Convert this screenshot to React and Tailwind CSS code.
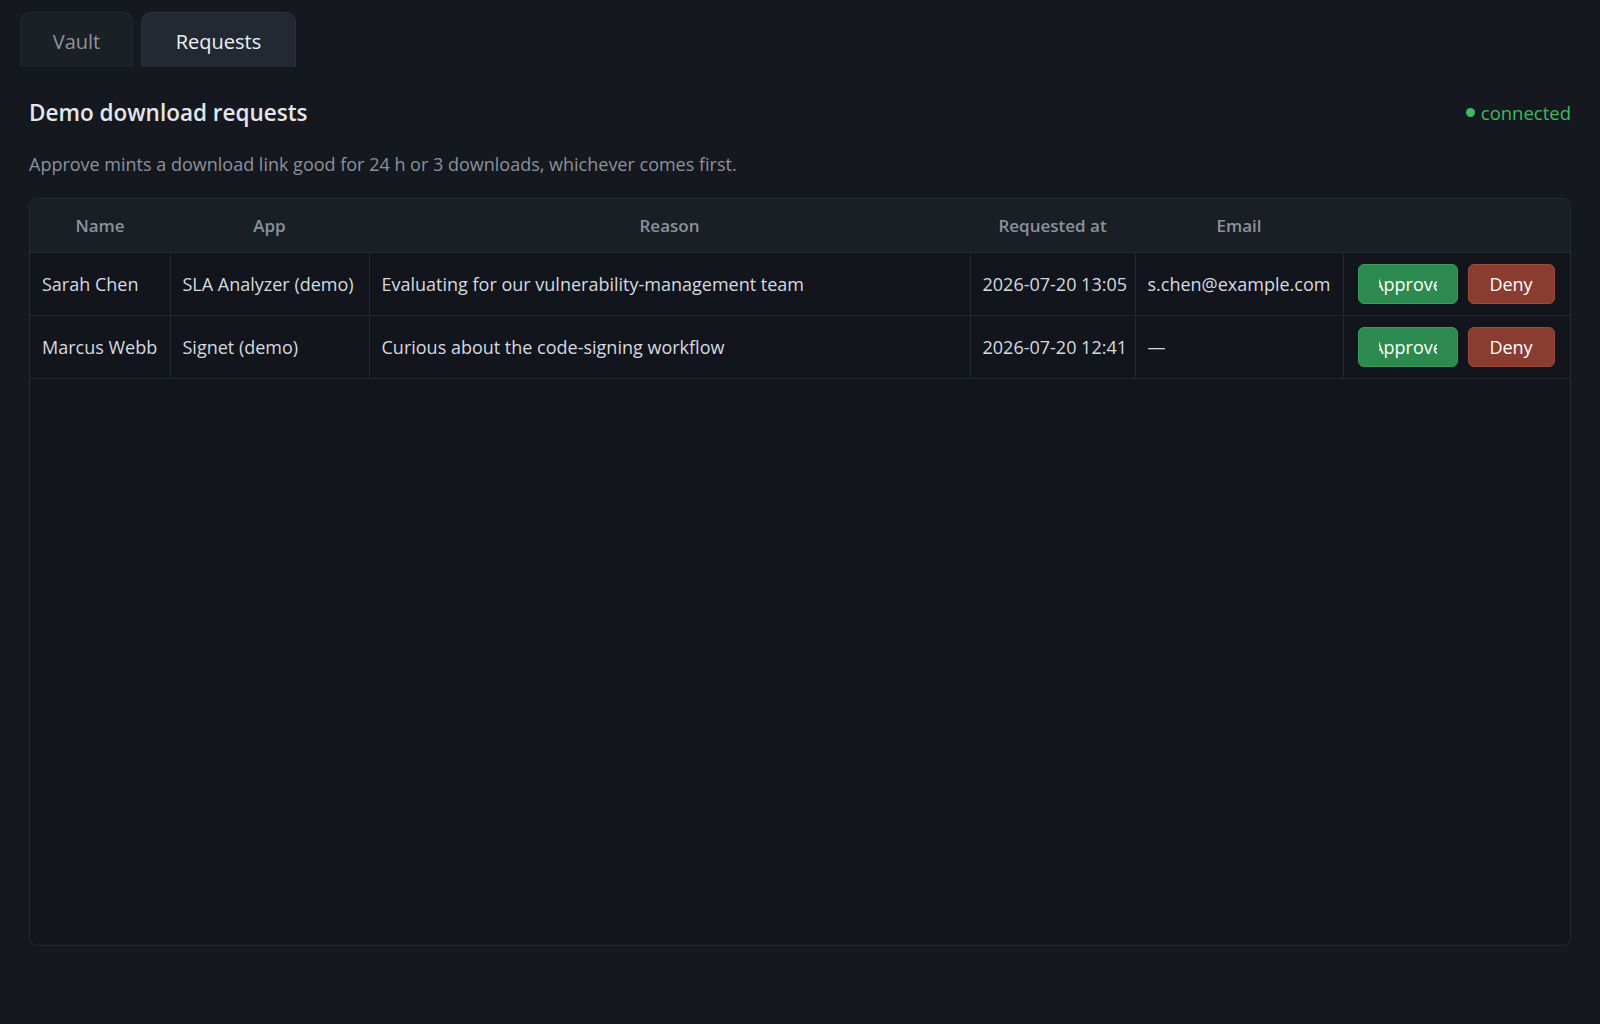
import { useState } from 'react';

const rows = [
  {
    name: 'Sarah Chen',
    app: 'SLA Analyzer (demo)',
    reason: 'Evaluating for our vulnerability-management team',
    at: '2026-07-20 13:05',
    email: 's.chen@example.com',
  },
  {
    name: 'Marcus Webb',
    app: 'Signet (demo)',
    reason: 'Curious about the code-signing workflow',
    at: '2026-07-20 12:41',
    email: '—',
  },
];

/* ─── Botão com texto cortado no centro ─── */
function ActionButton({ label, tone, width }) {
  const colors =
    tone === 'green'
      ? 'bg-[#2d8a4e] border-[#3a9a5c]'
      : 'bg-[#8a3c30] border-[#9c4a3d]';
  return (
    <button
      type="button"
      className={`flex h-10 items-center justify-center rounded-md border text-[18px] text-white ${colors} ${width}`}
    >
      <span className="flex w-[58px] justify-center overflow-hidden whitespace-nowrap">
        <span className="shrink-0">{label}</span>
      </span>
    </button>
  );
}

export default function App() {
  const [tab, setTab] = useState('requests');

  return (
    <div
      className="min-h-screen h-[1024px] bg-[#15181e] text-[#d6dae0]"
      style={{ fontFamily: '"Open Sans", "Noto Sans", sans-serif' }}
    >
      {/* ── Abas ── */}
      <div className="flex gap-2 px-5 pt-3">
        <button
          type="button"
          onClick={() => setTab('vault')}
          className={`h-[55px] w-[113px] rounded-t-[10px] border border-b-0 pt-[3px] text-[20px] font-medium ${
            tab === 'vault' ? 'border-[#2c323c] bg-[#232933] text-[#eef1f4]' : 'border-[#22272f] bg-[#1b1f26] text-[#8e959f]'
          }`}
        >
          Vault
        </button>
        <button
          type="button"
          onClick={() => setTab('requests')}
          className={`h-[55px] w-[155px] rounded-t-[10px] border border-b-0 pt-[3px] text-[20px] font-medium ${
            tab === 'requests' ? 'border-[#2c323c] bg-[#232933] text-[#eef1f4]' : 'border-[#22272f] bg-[#1b1f26] text-[#8e959f]'
          }`}
        >
          Requests
        </button>
      </div>

      <div className="px-[29px]">
        <div className="flex items-center justify-between pt-[29px]">
          <h2 className="text-[22.5px] font-semibold text-[#e3e6ea]">Demo download requests</h2>
          <span className="flex items-center gap-[6px] text-[18.5px] text-[#3fb862]">
            <span className="h-[9px] w-[9px] rounded-full bg-[#3fb862]" />
            connected
          </span>
        </div>

        <p className="mt-[20px] text-[18px] leading-7 text-[#8b929c]">
          Approve mints a download link good for 24 h or 3 downloads, whichever comes first.
        </p>

        {/* ── Tabela ── */}
        <div className="mt-[20px] h-[748px] overflow-hidden rounded-lg border border-[#262b33] bg-[#12151b]">
          <table className="w-full table-fixed border-collapse text-[18px]">
            <thead>
              <tr className="h-[54px] bg-[#1a1e25] text-[17px] text-[#8b929c]">
                <th className="w-[140px] font-semibold">Name</th>
                <th className="w-[199px] font-semibold">App</th>
                <th className="w-[601px] font-semibold">Reason</th>
                <th className="w-[165px] font-semibold">Requested at</th>
                <th className="w-[208px] font-semibold">Email</th>
                <th />
              </tr>
            </thead>
            <tbody>
              {rows.map(r => (
                <tr key={r.name} className="h-[63px] border-t border-b border-[#23282f]">
                  <td className="border-r border-[#23282f] px-3 whitespace-nowrap">{r.name}</td>
                  <td className="border-r border-[#23282f] px-3 whitespace-nowrap">{r.app}</td>
                  <td className="border-r border-[#23282f] px-3">{r.reason}</td>
                  <td className="border-r border-[#23282f] px-3 whitespace-nowrap">{r.at}</td>
                  <td className="border-r border-[#23282f] px-3 whitespace-nowrap">{r.email}</td>
                  <td className="px-[14px]">
                    <div className="flex gap-[10px]">
                      <ActionButton label="Approve" tone="green" width="w-[100px]" />
                      <ActionButton label="Deny" tone="red" width="w-[87px]" />
                    </div>
                  </td>
                </tr>
              ))}
            </tbody>
          </table>
        </div>
      </div>
    </div>
  );
}
